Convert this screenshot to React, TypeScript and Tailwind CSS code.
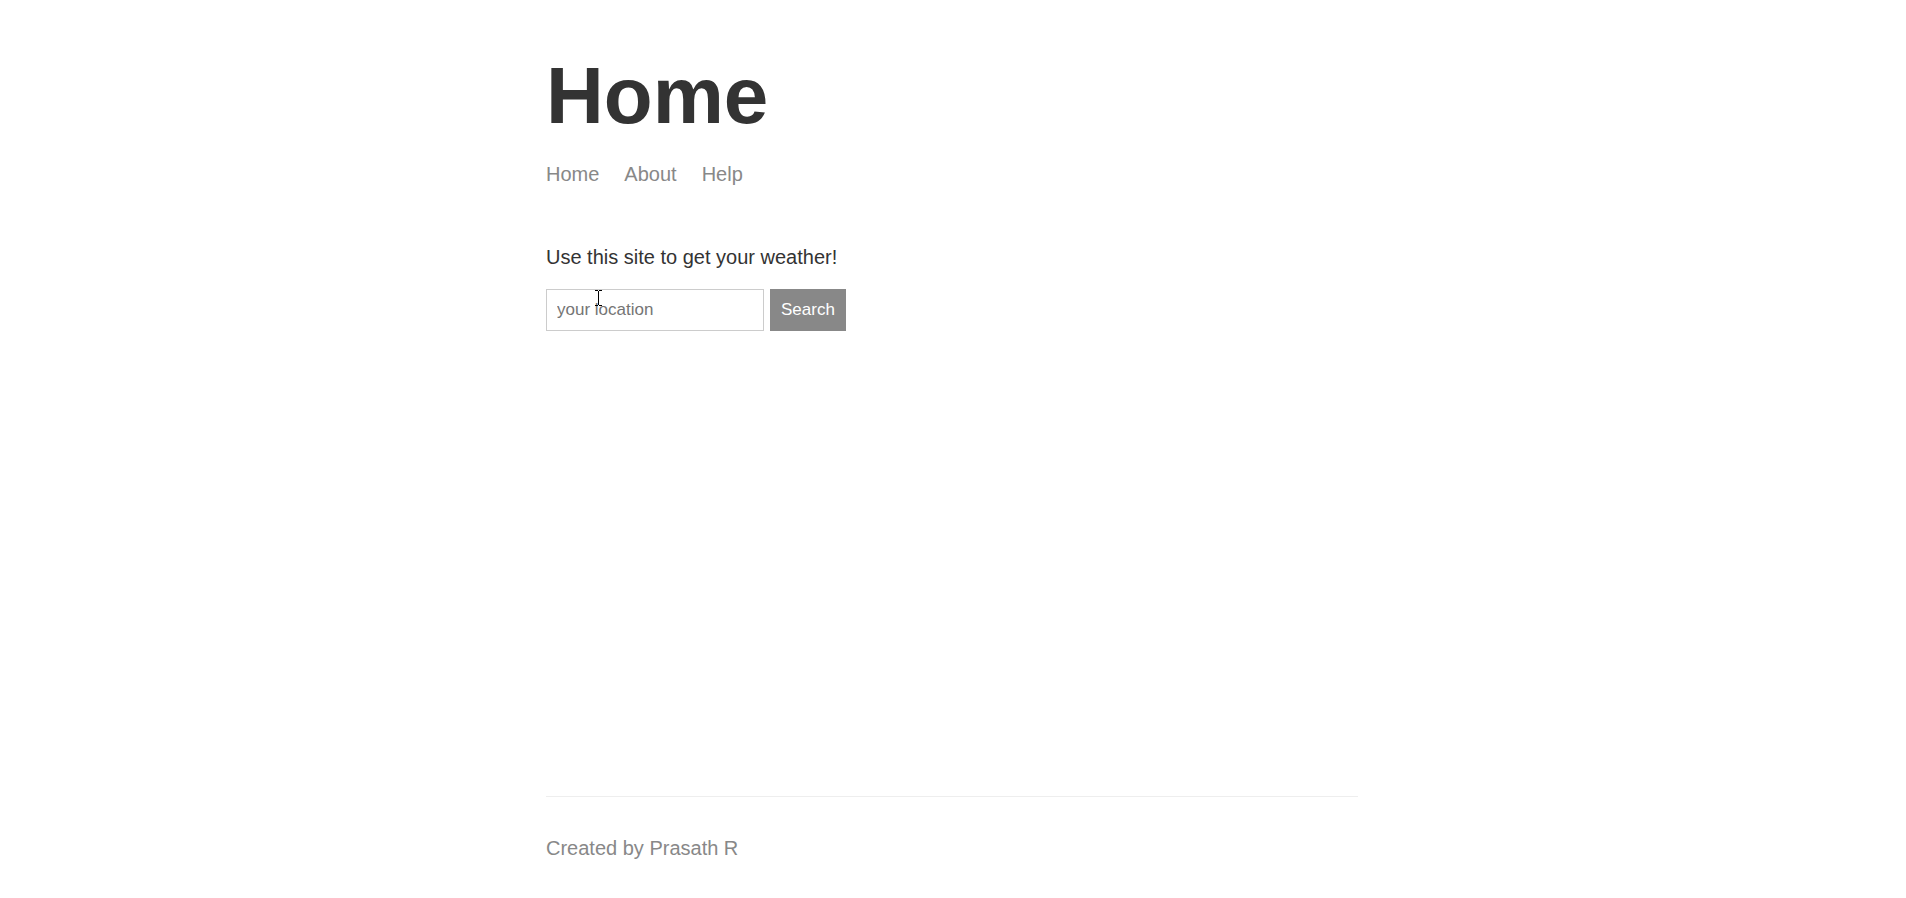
function TextCursor() {
  return (
    <svg
      aria-hidden="true"
      viewBox="0 0 7 16"
      className="pointer-events-none absolute top-0 left-[49px] h-4 w-[7px] translate-y-px"
      shapeRendering="crispEdges"
      fill="#000000"
    >
      <path d="M0 0h3v1H0zM4 0h3v1H4zM3 1h1v14H3zM0 15h3v1H0zM4 15h3v1H4z" />
    </svg>
  );
}

export default function App() {
  return (
    <div className="flex min-h-screen flex-col bg-white pr-0.5 font-['Liberation_Sans',Arial,sans-serif] text-xl leading-6 text-[#333333]">
      <div className="mx-auto flex w-full max-w-[812px] flex-1 flex-col">
        <main className="flex-1 pt-[50px]">
          <h1 className="text-[80px] leading-[92px] font-bold">Home</h1>
          <nav className="mt-5 flex gap-[25px] text-[#888888]">
            <a href="#home">Home</a>
            <a href="#about">About</a>
            <a href="#help">Help</a>
          </nav>
          <p className="mt-[59px]">Use this site to get your weather!</p>
          <form className="mt-5 flex gap-[6px] text-[17px]" onSubmit={(e) => e.preventDefault()}>
            <div className="relative">
              <input
                aria-label="Location"
                placeholder="your location"
                className="block h-[42px] w-[218px] border border-[#cccccc] px-[10px] outline-none placeholder:text-[#757575]"
              />
              <TextCursor />
            </div>
            <button className="h-[42px] bg-[#888888] px-[11px] text-white">Search</button>
          </form>
        </main>
        <footer className="border-t border-[#eeeeee] pt-[39px] pb-[38px] text-[#888888]">Created by Prasath R</footer>
      </div>
    </div>
  );
}
